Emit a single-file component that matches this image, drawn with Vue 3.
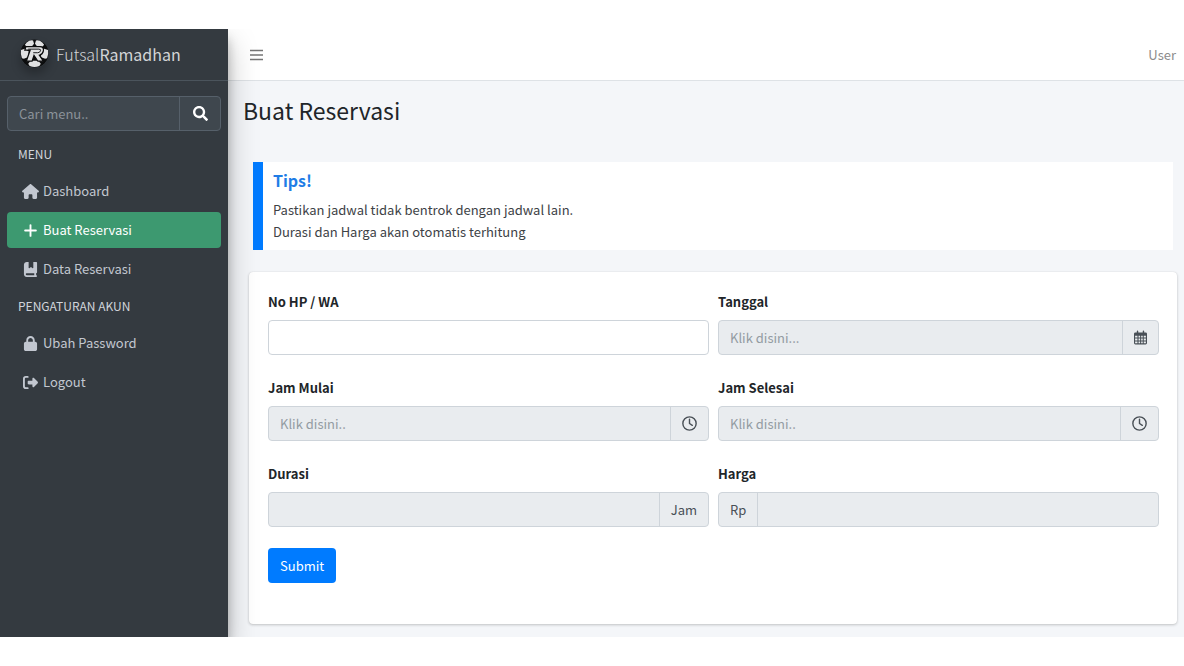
<script setup>
import { ref } from 'vue'

const query = ref('')
const phone = ref('')

const sections = [
  {
    title: 'Menu',
    items: [
      { label: 'Dashboard', icon: 'home' },
      { label: 'Buat Reservasi', icon: 'plus', active: true },
      { label: 'Data Reservasi', icon: 'book' },
    ],
  },
  {
    title: 'Pengaturan Akun',
    items: [
      { label: 'Ubah Password', icon: 'lock' },
      { label: 'Logout', icon: 'logout' },
    ],
  },
]
</script>

<template>
  <div class="app">
    <aside class="sidebar">
      <a class="brand" href="#">
        <svg class="logo" viewBox="0 0 30 30" aria-hidden="true">
          <circle cx="15" cy="15" r="14.500" fill="#0c0d0e" />
          <g fill="#e0e1e2">
            <path d="M7 3.500 Q10 .8 13.500 1.500 L14.500 5 L12 8 L7 8 L5 6z" />
            <path d="M23 3.500 Q20 .8 16.500 1.500 L15.500 5 L18 8 L23 8 L25 6z" />
            <path d="M1 11.500 L5 10 L9 13 L8 19 L4 20.500 L2 20 Q.3 16 1 11.500z" />
            <path d="M29 11.500 L25 10 L21 13 L22 19 L26 20.500 L28 20 Q29.700 16 29 11.500z" />
            <path d="M11 22.500 L19 22.500 L21.500 25.500 L20 28 Q15 30 10 28 L8.500 25.500z" />
          </g>
          <path d="M6 8h14.500q4.500 0 3.700 4.200-.7 3.600-4.200 4.600l4.200 6.200h-5.700l-4-6-2 6H6.500l4-11.500H5z" fill="#e0e1e2" stroke="#0c0d0e" stroke-width="1.300" />
          <path d="M8.500 10.500h11q2.300 0 1.700 1.700-.6 2-3 2h-4.500" fill="none" stroke="#16181a" stroke-width="1" />
        </svg>
        <span class="brand-text">Futsal<b>Ramadhan</b></span>
      </a>

      <form class="search" role="search" @submit.prevent>
        <input v-model="query" type="search" placeholder="Cari menu.." aria-label="Cari menu" />
        <button type="submit" aria-label="Cari">
          <svg viewBox="0 0 512 512"><path fill="currentColor" d="M505 442.700L405.300 343c-4.500-4.500-10.600-7-17-7H372c27.600-35.300 44-79.700 44-128C416 93.100 322.900 0 208 0S0 93.100 0 208s93.100 208 208 208c48.300 0 92.700-16.400 128-44v16.300c0 6.400 2.500 12.500 7 17l99.700 99.700c9.400 9.400 24.600 9.400 33.900 0l28.300-28.300c9.400-9.400 9.400-24.600.1-34zM208 336c-70.700 0-128-57.200-128-128 0-70.700 57.200-128 128-128 70.700 0 128 57.200 128 128 0 70.700-57.200 128-128 128z" /></svg>
        </button>
      </form>

      <nav>
        <section v-for="section in sections" :key="section.title">
          <h2>{{ section.title }}</h2>
          <ul>
            <li v-for="item in section.items" :key="item.label">
              <a href="#" :class="{ active: item.active }" :aria-current="item.active ? 'page' : null">
                <svg v-if="item.icon === 'home'" viewBox="0 0 576 512"><path fill="currentColor" d="M575.800 255.500c0 18-15 32.100-32 32.100h-32l.7 160.200V472c0 22.100-17.900 40-40 40H392c-22.100 0-40-17.900-40-40v-88c0-17.700-14.300-32-32-32h-64c-17.700 0-32 14.300-32 32v88c0 22.100-17.900 40-40 40h-80c-22.100 0-40-17.900-40-40V287.600H32c-18 0-32-14-32-32.100 0-9 3-17 10-24L266.400 8c7-7 15-8 22-8s15 2 21 7l255.400 224.500c8 7 12 15 11 24z" /></svg>
                <svg v-else-if="item.icon === 'plus'" viewBox="-32 0 512 512"><path d="M224 72v368M40 256h368" fill="none" stroke="currentColor" stroke-width="64" stroke-linecap="round" /></svg>
                <svg v-else-if="item.icon === 'book'" viewBox="0 0 448 512"><path fill="currentColor" fill-rule="evenodd" d="M96 0h64v200c0 13 14 20 24 12l56-45 56 45c10 8 24 1 24-12V0h96c18 0 32 14 32 32v320c0 18-14 32-32 32v64c18 0 32 14 32 32s-14 32-32 32H96c-53 0-96-43-96-96V96C0 43 43 0 96 0zM64 416c0 18 14 32 32 32h256v-64H96c-18 0-32 14-32 32z" /></svg>
                <svg v-else-if="item.icon === 'lock'" viewBox="0 0 448 512"><path fill="currentColor" d="M144 144v48h160v-48c0-44.200-35.800-80-80-80s-80 35.800-80 80zM80 192v-48C80 64.500 144.500 0 224 0s144 64.500 144 144v48h16c35.300 0 64 28.700 64 64v192c0 35.300-28.700 64-64 64H64c-35.300 0-64-28.700-64-64V256c0-35.300 28.700-64 64-64z" /></svg>
                <svg v-else viewBox="0 0 512 512"><path fill="none" stroke="currentColor" stroke-width="64" stroke-linecap="round" d="M160 64H96c-35 0-64 29-64 64v256c0 35 29 64 64 64h64" /><path fill="currentColor" d="M502.600 278.600c12.500-12.500 12.500-32.800 0-45.300l-128-128C365 96 352 93 340 98c-12 5-20 17-20 30v64H192c-18 0-32 14-32 32v64c0 18 14 32 32 32h128v64c0 13 8 25 20 30 12 5 25 2 35-7z" /></svg>
                <span>{{ item.label }}</span>
              </a>
            </li>
          </ul>
        </section>
      </nav>
    </aside>

    <div class="page">
      <header class="topbar">
        <button type="button" class="toggle" aria-label="Menu">
          <svg viewBox="0 0 14 12"><path d="M1 1.500h13M1 6h13M1 10.500h13" stroke="currentColor" stroke-width="1.500" /></svg>
        </button>
        <a class="user" href="#">User</a>
      </header>

      <main>
        <h1>Buat Reservasi</h1>

        <div class="callout">
          <h3>Tips!</h3>
          <p>Pastikan jadwal tidak bentrok dengan jadwal lain.<br />Durasi dan Harga akan otomatis terhitung</p>
        </div>

        <form class="card" @submit.prevent>
          <div class="fields">
            <div class="field">
              <label for="phone">No HP / WA</label>
              <div class="group"><input id="phone" v-model="phone" type="text" /></div>
            </div>
            <div class="field">
              <label for="date">Tanggal</label>
              <div class="group filled">
                <input id="date" type="text" placeholder="Klik disini..." readonly />
                <span class="addon">
                  <svg class="calendar" viewBox="0 0 14 16"><path fill="currentColor" fill-rule="evenodd" d="M3 1.500Q3 .5 3.800 .5T4.600 1.500V2.500H9.400V1.500Q9.400 .5 10.200 .5T11 1.500V2.500H12.500Q14 2.500 14 4V14Q14 15.500 12.500 15.500H1.500Q0 15.500 0 14V4Q0 2.500 1.500 2.500H3zM1.200 6v2h2.500V6zM4.900 6v2h1.700V6zM7.700 6v2h1.700V6zM10.500 6v2h2.300V6zM1.200 9.200v2h2.500v-2zM4.900 9.200v2h1.700v-2zM7.700 9.200v2h1.700v-2zM10.500 9.200v2h2.300v-2zM1.200 12.300v2h2.500v-2zM4.900 12.300v2h1.700v-2zM7.700 12.300v2h1.700v-2zM10.500 12.300v2h2.300v-2z" /></svg>
                </span>
              </div>
            </div>
            <div v-for="name in ['Jam Mulai', 'Jam Selesai']" :key="name" class="field">
              <label :for="name">{{ name }}</label>
              <div class="group filled">
                <input :id="name" type="text" placeholder="Klik disini.." readonly />
                <span class="addon">
                  <svg class="clock" viewBox="0 0 16 16" fill="none" stroke="currentColor" stroke-width="1.500"><circle cx="8" cy="8" r="7.100" /><path d="M8 3.500V8l3 2" stroke-linecap="round" stroke-linejoin="round" /></svg>
                </span>
              </div>
            </div>
            <div class="field">
              <label for="duration">Durasi</label>
              <div class="group filled">
                <input id="duration" type="text" readonly />
                <span class="addon">Jam</span>
              </div>
            </div>
            <div class="field">
              <label for="price">Harga</label>
              <div class="group filled">
                <span class="addon lead">Rp</span>
                <input id="price" type="text" readonly />
              </div>
            </div>
          </div>
          <button class="submit" type="submit">Submit</button>
        </form>
      </main>
    </div>
  </div>
</template>

<style>
body {
  margin: 0;
  background: #fff;
}
</style>

<style scoped>
* {
  box-sizing: border-box;
}
.app {
  display: flex;
  min-height: calc(100vh - 58px);
  margin: 29px 0;
  overflow: hidden;
  background: #f4f6f9;
  color: #212529;
  font: 400 13px/22px "Noto Sans CJK SC", "Noto Sans", sans-serif;
}
input,
button {
  font: inherit;
}
a {
  color: inherit;
  text-decoration: none;
}
svg {
  display: block;
  flex: none;
}

.sidebar {
  position: relative;
  z-index: 1;
  flex: none;
  width: 228px;
  background: #343a40;
  color: #c2c7d0;
  box-shadow: 0 14px 28px rgba(0, 0, 0, 0.25), 0 10px 10px rgba(0, 0, 0, 0.22);
}
.brand {
  display: flex;
  align-items: center;
  gap: 7px;
  height: 52px;
  padding: 0 0 2px 20px;
  border-bottom: 1px solid #4b545c;
  color: #d3d5d7;
}
.logo {
  width: 29px;
  height: 29px;
  border-radius: 50%;
  box-shadow: 0 6px 10px rgba(0, 0, 0, 0.25);
}
.brand-text {
  font-size: 16px;
  font-weight: 300;
}
.brand-text b {
  font-weight: 400;
}
.search {
  display: flex;
  height: 35px;
  margin: 15px 7px 0;
  border: 1px solid #56606a;
  border-radius: 4px;
  background: #3f474e;
  overflow: hidden;
}
.search input {
  flex: 1;
  min-width: 0;
  padding: 0 11px;
  border: 0;
  outline: 0;
  background: transparent;
  color: #fff;
}
.search input::placeholder {
  color: #8b9299;
  opacity: 1;
}
.search button {
  display: grid;
  place-items: center;
  width: 41px;
  padding: 0;
  border: 0;
  border-left: 1px solid #56606a;
  background: transparent;
  color: #fff;
}
.search svg {
  width: 15px;
  height: 15px;
}
nav {
  padding: 4px 7px 0;
}
nav h2 {
  margin: 0;
  padding: 8px 11px;
  color: #d0d4db;
  font-size: 12px;
  font-weight: 400;
  line-height: 22px;
  text-transform: uppercase;
}
nav ul {
  display: grid;
  gap: 3px;
  margin: 0;
  padding: 0;
  list-style: none;
}
nav li a {
  display: flex;
  align-items: center;
  gap: 4px;
  height: 36px;
  padding-left: 15px;
  border-radius: 4px;
}
nav li svg {
  width: 17px;
  height: 15px;
}
nav li a.active {
  background: #3d9970;
  color: #fff;
}

.page {
  flex: 1;
  min-width: 0;
}
.topbar {
  display: flex;
  align-items: center;
  justify-content: space-between;
  height: 52px;
  padding: 0 8px 0 21px;
  border-bottom: 1px solid #dee2e6;
  background: #fff;
  color: #757575;
}
.toggle {
  padding: 0;
  border: 0;
  background: none;
  color: inherit;
}
.toggle svg {
  width: 14px;
  height: 12px;
}
.user {
  color: #8c8c8c;
}
main {
  padding: 13px 7px 13px 15px;
}
h1 {
  margin: 0 0 36px;
  font-size: 23px;
  font-weight: 400;
  line-height: 32px;
}
.callout {
  margin: 0 4px 22px 10px;
  padding: 7px 10px;
  border-left: 10px solid #007bff;
  background: #fff;
  color: #3d4246;
}
.callout h3 {
  margin: 0 0 8px;
  color: #1f7de6;
  font-size: 16px;
  font-weight: 600;
  line-height: 22px;
}
.callout p {
  margin: 0;
}
.card {
  margin-left: 6px;
  padding: 19px 18px 41px 19px;
  border-radius: 4px;
  background: #fff;
  box-shadow: 0 0 1px rgba(0, 0, 0, 0.13), 0 1px 3px rgba(0, 0, 0, 0.2);
}
.fields {
  display: grid;
  grid-template-columns: 1fr 1fr;
  gap: 22px 9px;
}
.field label {
  display: block;
  margin-bottom: 7px;
  font-weight: 700;
}
.group {
  display: flex;
  height: 35px;
  border: 1px solid #ced4da;
  border-radius: 4px;
  background: #fff;
  overflow: hidden;
}
.group.filled {
  background: #e9ecef;
}
.group input {
  flex: 1;
  min-width: 0;
  padding: 0 11px;
  border: 0;
  outline: 0;
  background: transparent;
  color: #495057;
}
.group input::placeholder {
  color: #939ba2;
  opacity: 1;
}
.addon {
  display: flex;
  align-items: center;
  padding: 0 11px;
  border-left: 1px solid #ced4da;
  color: #495057;
}
.addon.lead {
  border-right: 1px solid #ced4da;
  border-left: 0;
}
.calendar {
  width: 13px;
  height: 15px;
}
.clock {
  width: 15px;
  height: 15px;
}
.submit {
  display: block;
  height: 35px;
  margin-top: 21px;
  padding: 0 12px;
  border: 0;
  border-radius: 4px;
  background: #007bff;
  color: #fff;
}
</style>
